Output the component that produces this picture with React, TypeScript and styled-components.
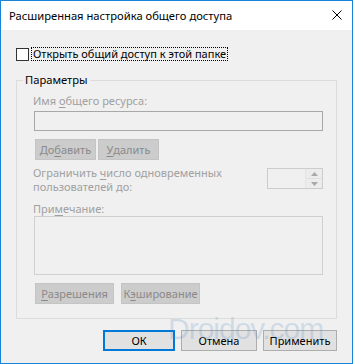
import React from 'react';
import styled, { createGlobalStyle } from 'styled-components';

const GlobalStyle = createGlobalStyle`
  html, body {
    margin: 0;
    padding: 0;
    background: #f0f0f0;
  }
  * {
    box-sizing: border-box;
  }
`;

const FONT = `"Noto Sans", "Open Sans", sans-serif`;

export default function App() {
  return (
    <>
      <GlobalStyle />
      <Window>
        <TitleBar>
          <Title>Расширенная настройка общего доступа</Title>
          <CloseIcon width="10" height="10" viewBox="0 0 10 10">
            <path d="M0.5 0.5 L9.5 9.5 M9.5 0.5 L0.5 9.5" stroke="#000" strokeWidth="1" />
          </CloseIcon>
        </TitleBar>

        <Body>
          <CheckRow>
            <CheckBox />
            <FocusLabel>Открыть общий доступ к этой папке</FocusLabel>
          </CheckRow>

          <Group>
            <Legend>Параметры</Legend>

            <FieldLabel>
              Имя <u>о</u>бщего ресурса:
            </FieldLabel>
            <TextBox />

            <ButtonRow>
              <DisabledButton $width={61}>
                До<u>б</u>авить
              </DisabledButton>
              <DisabledButton $width={61}>
                <u>У</u>далить
              </DisabledButton>
            </ButtonRow>

            <LimitRow>
              <LimitText>
                Ограничить <u>ч</u>исло одновременных
                <br />
                пользователей до:
              </LimitText>
              <Spinner>
                <SpinField />
                <SpinArrows>
                  <SpinHalf>
                    <svg width="7" height="4" viewBox="0 0 7 4">
                      <path d="M3.5 0 L7 4 L0 4 Z" fill="#a8a8a8" />
                    </svg>
                  </SpinHalf>
                  <SpinHalf>
                    <svg width="7" height="4" viewBox="0 0 7 4">
                      <path d="M0 0 L7 0 L3.5 4 Z" fill="#a8a8a8" />
                    </svg>
                  </SpinHalf>
                </SpinArrows>
              </Spinner>
            </LimitRow>

            <NoteLabel>
              При<u>м</u>ечание:
            </NoteLabel>
            <NoteBox />

            <ButtonRow>
              <DisabledButton $width={79}>
                <u>Р</u>азрешения
              </DisabledButton>
              <DisabledButton $width={79} $gap={5}>
                К<u>э</u>ширование
              </DisabledButton>
            </ButtonRow>
          </Group>

          <Footer>
            <DialogButton $width={72} $primary>
              ОК
            </DialogButton>
            <DialogButton $width={76}>Отмена</DialogButton>
            <DialogButton $width={74}>Применить</DialogButton>
          </Footer>
        </Body>

        <Watermark>Droidov.com</Watermark>
      </Window>
    </>
  );
}

const Window = styled.div`
  position: relative;
  width: 353px;
  height: 364px;
  display: flex;
  flex-direction: column;
  background: #f0f0f0;
  border: 1px solid #1883d7;
  font-family: ${FONT};
  font-size: 11px;
  color: #000;
  overflow: hidden;
`;

const TitleBar = styled.div`
  height: 29px;
  flex: none;
  display: flex;
  align-items: center;
  justify-content: space-between;
  background: #fff;
  padding: 0 10px 0 8px;
`;

const Title = styled.span`
  font-size: 11.2px;
  line-height: 16px;
  color: #000;
`;

const CloseIcon = styled.svg`
  display: block;
  margin-top: -1px;
`;

const Body = styled.div`
  flex: 1;
  display: flex;
  flex-direction: column;
  padding: 17px 15px 0 15px;
`;

const CheckRow = styled.div`
  display: flex;
  align-items: center;
  height: 14px;
`;

const CheckBox = styled.span`
  width: 13px;
  height: 13px;
  border: 1px solid #333;
  background: #fff;
  flex: none;
`;

const FocusLabel = styled.span`
  margin-left: 2px;
  padding: 0 1px;
  height: 14px;
  line-height: 12px;
  border: 1px dotted #000;
  white-space: nowrap;
`;

const Group = styled.fieldset`
  margin: 11px 0 0 0;
  padding: 0 13px 14px 16px;
  border: 1px solid #dcdcdc;
  min-width: 0;
  display: flex;
  flex-direction: column;
`;

const Legend = styled.legend`
  margin-left: -10px;
  padding: 0 2px;
  line-height: 16px;
  font-size: 11.2px;
  color: #000;
`;

const Disabled = `
  color: #a0a0a0;
  & u {
    text-decoration-thickness: 1px;
    text-underline-offset: 2px;
  }
`;

const FieldLabel = styled.div`
  ${Disabled}
  margin-top: 5px;
  line-height: 16px;
`;

const TextBox = styled.div`
  margin: 2px 0 0 1px;
  height: 20px;
  border: 1px solid #a8a8a8;
  background: #f0f0f0;
`;

const ButtonRow = styled.div`
  display: flex;
  gap: 2px;
  margin-top: 8px;
  padding-left: 2px;
`;

const DisabledButton = styled.div<{ $width: number; $gap?: number }>`
  ${Disabled}
  width: ${(p) => p.$width}px;
  margin-left: ${(p) => p.$gap ?? 0}px;
  height: 21px;
  display: flex;
  align-items: center;
  justify-content: center;
  background: #cccccc;
  border: 1px solid #c4c4c4;
  color: #8a8a8a;
`;

const LimitRow = styled.div`
  display: flex;
  justify-content: space-between;
  align-items: flex-start;
  margin-top: 6px;
`;

const LimitText = styled.div`
  ${Disabled}
  line-height: 14px;
`;

const Spinner = styled.div`
  width: 56px;
  height: 21px;
  margin-top: 2px;
  display: flex;
  border: 1px solid #cccccc;
  background: #f0f0f0;
`;

const SpinField = styled.div`
  flex: 1;
`;

const SpinArrows = styled.div`
  width: 17px;
  display: flex;
  flex-direction: column;
  border-left: 1px solid #e4e4e4;
`;

const SpinHalf = styled.div`
  flex: 1;
  display: flex;
  align-items: center;
  justify-content: center;
  background: #ececec;
  & + & {
    border-top: 1px solid #e0e0e0;
  }
`;

const NoteLabel = styled.div`
  ${Disabled}
  margin-top: 8px;
  line-height: 14px;
`;

const NoteBox = styled.div`
  margin: 0 0 0 1px;
  height: 59px;
  border: 1px solid #d0d0d0;
  background: #f0f0f0;
`;

const Footer = styled.div`
  display: flex;
  justify-content: flex-end;
  gap: 6px;
  margin-top: 11px;
`;

const DialogButton = styled.div<{ $width: number; $primary?: boolean }>`
  width: ${(p) => p.$width}px;
  height: 21px;
  display: flex;
  align-items: center;
  justify-content: center;
  background: #e1e1e1;
  border: ${(p) => (p.$primary ? '2px solid #0078d7' : '1px solid #adadad')};
  color: #000;
`;

const Watermark = styled.div`
  position: absolute;
  left: 167px;
  top: 311px;
  font-family: "Liberation Sans", Arial, sans-serif;
  font-size: 30px;
  letter-spacing: -1px;
  color: rgba(90, 140, 200, 0.22);
  pointer-events: none;
  white-space: nowrap;
`;
